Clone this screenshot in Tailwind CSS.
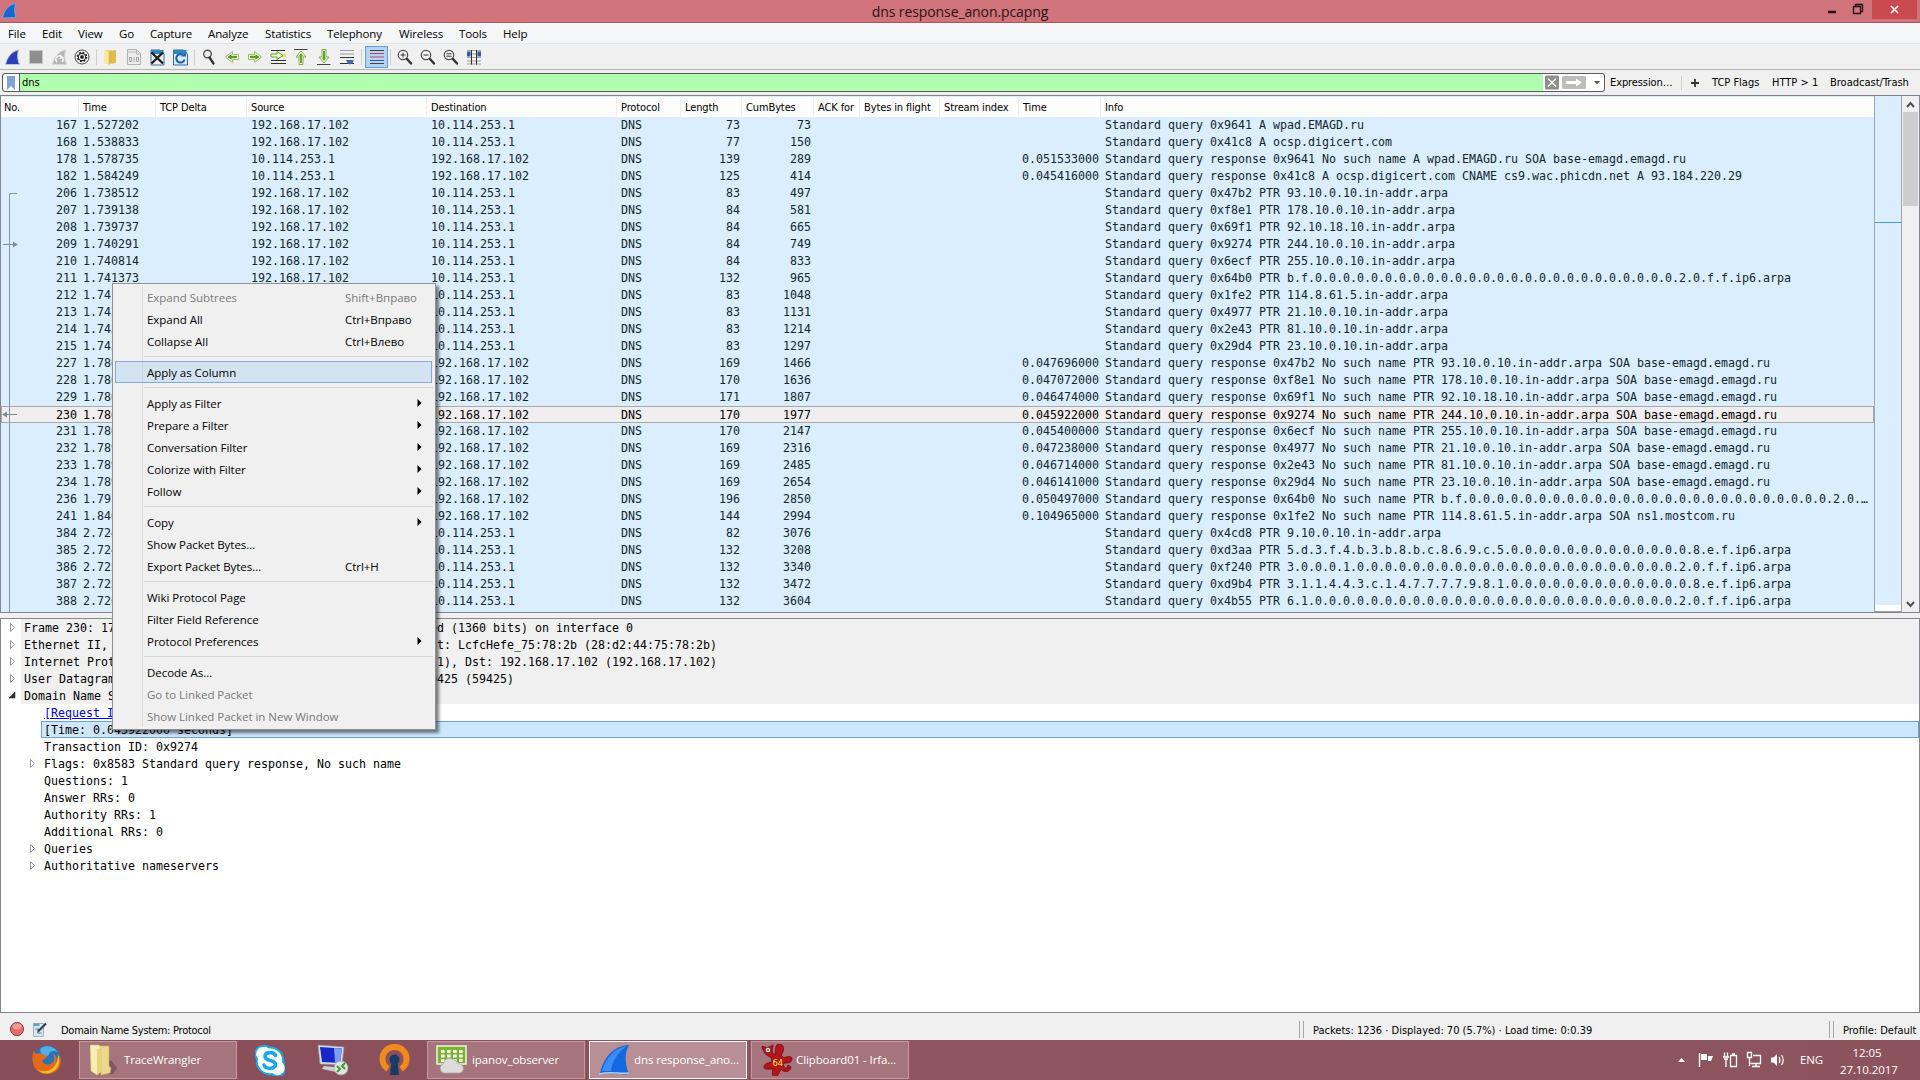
<!DOCTYPE html>
<html lang="en">
<head>
  <title>dns response_anon.pcapng</title>
  <meta charset="UTF-8" />
  <meta name="viewport" content="width=device-width, initial-scale=1" />
  <script src="https://cdn.jsdelivr.net/npm/@tailwindcss/browser@4"></script>
</head>
<body class="w-[1920px] h-[1080px] overflow-hidden flex flex-col bg-[#f0f0f0] text-black font-['DejaVu_Sans_Condensed','DejaVu_Sans',sans-serif] text-[11px] whitespace-nowrap">

  <!-- Title bar -->
  <header class="h-[23px] shrink-0 bg-[#d0737a] border-b border-[#a9555c] flex items-start relative">
    <svg class="w-4 h-4 mt-[3px] ml-[2px]" viewBox="0 0 16 16"><path d="M0.500 15C2 8 6 1.500 14 0.500C12 5 12.500 10 14 14.500Z" fill="#1767d2" stroke="#7db1ea" stroke-width="0.800"/></svg>
    <h1 class="absolute inset-x-0 top-0 text-center leading-[23px] text-[14px] text-[#2a1214] font-['Open_Sans',sans-serif] tracking-[-0.100px]">dns response_anon.pcapng</h1>
    <div class="ml-auto flex mr-[3px]">
      <svg class="w-[44px] h-[19px]" viewBox="0 0 44 19"><path d="M0 12h8" stroke="#241013" stroke-width="2.500"/><path d="M25.500 6.500h7v7h-7z M27.500 6v-1.500h7v7h-1.500" fill="none" stroke="#241013" stroke-width="1.300"/></svg>
      <div class="w-[45px] h-[19px] bg-[#c94b50] flex items-center justify-center">
        <svg class="w-[9px] h-[9px]" viewBox="0 0 9 9"><path d="M1 1l7 7M8 1l-7 7" stroke="#fff" stroke-width="1.600"/></svg>
      </div>
    </div>
  </header>

  <!-- Menu bar -->
  <nav class="h-[21px] shrink-0 bg-[#f5f6f7] border-b border-[#e3e4e6] flex items-center pl-2 pt-[2px] font-['Open_Sans',sans-serif] text-[11.500px] tracking-[-0.120px]">
    <span class="w-[34px]">File</span>
    <span class="w-[36px]">Edit</span>
    <span class="w-[41px]">View</span>
    <span class="w-[31px]">Go</span>
    <span class="w-[58px]">Capture</span>
    <span class="w-[57px]">Analyze</span>
    <span class="w-[62px]">Statistics</span>
    <span class="w-[72px]">Telephony</span>
    <span class="w-[60px]">Wireless</span>
    <span class="w-[44px]">Tools</span>
    <span>Help</span>
  </nav>

  <!-- Toolbar -->
  <div class="h-[26px] shrink-0 border-b border-[#b4b4b4] flex items-center">
    <svg class="w-[490px] h-[24px]" viewBox="0 45 490 24">
      <!-- start / stop / restart / options -->
      <path d="M5.500 64.500C7 58 11 51.500 18.500 50C17 55 17.500 60 19.500 64.500Z" fill="#2d3fb4" stroke="#b9c2e4"/>
      <rect x="29.500" y="50.500" width="13" height="13" fill="#8e8e8e" stroke="#c8c8c8"/>
      <path d="M52.500 64.500C54 58 58 51.500 65.500 50C64 55 64.500 60 66.500 64.500Z" fill="#b5b5b5" stroke="#d5d5d5"/>
      <path d="M57 62a3.500 3.500 0 1 1 5 0M60 55l2.500 2.500-3 1" fill="none" stroke="#f7f7f7" stroke-width="1.400"/>
      <circle cx="82" cy="57" r="7" fill="#fff" stroke="#444"/>
      <circle cx="82" cy="57" r="4.200" fill="#222"/><circle cx="82" cy="57" r="4.600" fill="none" stroke="#222" stroke-width="1.400" stroke-dasharray="1.900 1.700"/>
      <circle cx="82" cy="57" r="2.500" fill="none" stroke="#fff" stroke-width="1.200"/>
      <path d="M96.500 49v16M194.500 49v16M361.500 49v16M390.500 49v16" stroke="#cfcfcf"/>
      <!-- open / save / close / reload -->
      <path d="M104 50h8v12l-2 3-6-2z" fill="#f0d67d"/><path d="M109 51l7-1v13l-7 1z" fill="#e2bb4f"/><path d="M104 50l4 2v12l-4-1z" fill="#f9e8a6"/>
      <path d="M127.500 49.500h9l4 4v11h-13z" fill="#ececec" stroke="#b3b3b3"/><path d="M128 52h9M136.500 50v4h4" fill="none" stroke="#b3b3b3"/>
      <path d="M129.500 57.500h2v4h-2zM134 57v5M136.500 57.500h2v4h-2z" fill="none" stroke="#a5a5a5"/>
      <path d="M151 50h9l4 4v11h-13z" fill="#e9f0f4" stroke="#41768f"/><rect x="151" y="50" width="12.500" height="4" fill="#3089b7"/><path d="M151.500 52.500l11.500 11M163 52.500l-11.500 11" stroke="#1b1b1b" stroke-width="2.300"/>
      <path d="M173.500 50h10l4 4v11h-14z" fill="#dcecf6" stroke="#2a6e98"/><rect x="173.500" y="50" width="13" height="4" fill="#3089b7"/><path d="M184.500 59.500a4.200 4.200 0 1 1-1.500-4.500" fill="none" stroke="#1b5fae" stroke-width="2"/><path d="M181 56.500h5v-4z" fill="#1b5fae"/>
      <!-- find -->
      <circle cx="207.500" cy="54" r="3.800" fill="#ededed" stroke="#555" stroke-width="1.400"/><path d="M209.500 57.500l4 6" stroke="#333" stroke-width="2.300" stroke-linecap="round"/>
      <!-- navigation arrows -->
      <path d="M225.500 57l7-5.500v3h6v5h-6v3zM261.500 57l-7-5.500v3h-6v5h6v3z" fill="#fff" stroke="#8dba55" stroke-width="0.900"/>
      <path d="M227.500 57l4-3v1.800h5.500v2.400h-5.500v1.800zM259.500 57l-4-3v1.800h-5.500v2.400h5.500v1.800z" fill="#5f9c1c"/>
      <path d="M271 50.500h14M271 60.500h15M271 63.500h15" stroke="#333"/><path d="M280 53.500h6v3.500h-6z" fill="#f1e15a"/><path d="M271 54h6v-2.500l6 4-6 4V57h-6z" fill="#e9f5d5" stroke="#6ba526"/>
      <path d="M294 49.500h13.500" stroke="#444"/><path d="M301 51l5 6h-3v7.500h-4V57h-3z" fill="#fff" stroke="#7fae40"/><path d="M301 53l2.500 3.500h-1.500V63h-2v-6.500h-1.500z" fill="#6ba526"/>
      <path d="M317 64.500h13.500" stroke="#444"/><path d="M324 63l5-6h-3v-7.500h-4V57h-3z" fill="#fff" stroke="#7fae40"/><path d="M324 61l2.500-3.500h-1.500V51h-2v6.500h-1.500z" fill="#6ba526"/>
      <path d="M340 50.500h14M340 54h14" stroke="#9c9c9c"/><path d="M340 57.500h14M340 63.500h14" stroke="#333"/><path d="M346 60h8l-1.500 3-2.500 1.500-2.500-1.500z" fill="#3b6cab"/>
      <!-- colorize -->
      <rect x="365.500" y="46.500" width="22" height="21" fill="#b5d3f3" stroke="#5f9ddb"/>
      <path d="M370 50.500h14" stroke="#3d4350"/><path d="M370 53.500h14" stroke="#c6404b"/><path d="M370 57h14" stroke="#b0506a"/><path d="M370 60.500h14" stroke="#3556a6"/><path d="M370 63.500h14" stroke="#3d4350"/>
      <!-- zoom in / out / normal -->
      <g fill="#f4f4f4" stroke="#4c4c4c" stroke-width="1.200"><circle cx="403" cy="55" r="4.700"/><circle cx="426" cy="55" r="4.700"/><circle cx="449" cy="55" r="4.700"/></g>
      <path d="M407 59l4 4.500M430 59l4 4.500M453 59l4 4.500" stroke="#333" stroke-width="2.400" stroke-linecap="round"/>
      <path d="M400.500 55h5M403 52.500v5M423.500 55h5M446.500 53.800h5M446.500 56.200h5" stroke="#333"/>
      <!-- resize columns -->
      <path d="M467 50.500h14M467 54h14M467 57.500h14M467 61h14M467 64h14" stroke="#8b8b8b" stroke-width="0.800"/><path d="M471.500 50v14.500M476.500 50v14.500" stroke="#333"/>
      <path d="M467 51.500h3.500v5H467zM477.500 51.500h3.500v5h-3.500z" fill="#2c5f9e"/>
    </svg>
  </div>

  <!-- Display filter -->
  <div class="h-[25px] shrink-0 flex items-center pl-[2px]">
    <div class="w-[1603px] h-[19px] border border-[#5a5a5a] rounded-[3px] bg-white flex items-center overflow-hidden">
      <div class="w-[17px] h-full border-r border-[#5a5a5a] flex items-center justify-center shrink-0">
        <svg class="w-[8px] h-[14px]" viewBox="0 0 8 14"><path d="M0 0h8v14l-4-4-4 4z" fill="#7da3d8"/></svg>
      </div>
      <div class="w-[1523px] h-full bg-[#afffaf] pl-[2px] leading-[18px] text-[11px] shrink-0">dns</div>
      <svg class="w-[60px] h-[17px] shrink-0" viewBox="0 0 60 17">
        <rect x="2" y="1.500" width="14" height="14" rx="1.500" fill="#8e8e8e"/><path d="M5 4.500l8 8M13 4.500l-8 8" stroke="#fff" stroke-width="1.300"/>
        <rect x="19" y="2" width="24" height="13" rx="1.500" fill="#bdbdbd"/><path d="M23 7h10V4.500l6 4-6 4V10H23z" fill="#fff"/>
        <path d="M51 7h6l-3 3.500z" fill="#555"/>
      </svg>
    </div>
    <span class="ml-[5px] w-[71px] pt-[2px] tracking-[-0.100px]">Expression…</span>
    <span class="w-px h-[14px] bg-[#cfcfcf]"></span>
    <svg class="ml-[9px] w-[8px] h-[8px]" viewBox="0 0 8 8"><path d="M4 0v8M0 4h8" stroke="#333" stroke-width="1.800"/></svg>
    <span class="ml-[13px] w-[60px] pt-[2px]">TCP Flags</span>
    <span class="w-[58px] pt-[2px]">HTTP &gt; 1</span>
    <span class="pt-[2px]">Broadcast/Trash</span>
  </div>

  <!-- Packet list -->
  <section class="h-[518px] shrink-0 border border-[#828790] border-t-[#7b7f8a] flex relative">
    <div class="w-[1874px] bg-[#daeeff] border-r border-[#9aa7b3] flex flex-col">
      <div class="mt-px h-[20px] shrink-0 bg-[#fdfdfd] grid grid-cols-[78px_77px_91px_180px_190px_64px_61px_72px_46px_80px_79px_82px_1fr] items-center [&>span]:border-r [&>span]:border-[#ececf2] [&>span]:h-full [&>span]:leading-[22px] [&>span]:pl-[4px] [&>span:first-child]:pl-[3px] [&>span:last-child]:border-0 tracking-[-0.120px]">
        <span>No.</span><span>Time</span><span>TCP Delta</span><span>Source</span><span>Destination</span><span>Protocol</span><span>Length</span><span>CumBytes</span><span>ACK for</span><span>Bytes in flight</span><span>Stream index</span><span>Time</span><span>Info</span>
      </div>
      <div id="packets" class="flex flex-col font-['DejaVu_Sans_Mono',monospace] text-[11.630px] text-[#12272e]"></div>
    </div>
    <!-- Intelligent scrollbar minimap -->
    <div class="w-[26px] flex flex-col">
      <div class="h-[126px] bg-[#daeeff]"></div>
      <div class="h-px bg-[#4a9bdc]"></div>
      <div class="h-[382px] bg-[#daeeff]"></div>
      <div class="h-[7px] bg-white border-b border-[#a0a0a0]"></div>
    </div>
    <div class="w-[18px] bg-[#f0f0f0] border-l border-[#a5a5a5] flex flex-col items-center">
      <svg class="w-[15px] h-[16px]" viewBox="0 0 15 16"><path d="M4 11l3.500-4 3.500 4" fill="none" stroke="#505050" stroke-width="2"/></svg>
      <div class="w-[15px] h-[94px] bg-[#cdcdcd]"></div>
      <svg class="w-[15px] h-[16px] mt-auto" viewBox="0 0 15 16"><path d="M4 6l3.500 4L11 6" fill="none" stroke="#505050" stroke-width="2"/></svg>
    </div>
    <!-- Related packet marks -->
    <svg class="absolute left-0 top-[21px] w-[20px] h-[495px]" viewBox="0 0 20 495">
      <path d="M16 76.500H8.500V495" fill="none" stroke="#8397a8"/>
      <path d="M2 127.500h12M4 297.500h12" stroke="#7d8c99"/>
      <path d="M12 124.500l5 3-5 3zM6 294.500l-5 3 5 3z" fill="#7d8c99"/>
    </svg>
  </section>

  <!-- Packet details -->
  <section class="mt-[5px] h-[395px] shrink-0 border border-[#828790] bg-white font-['DejaVu_Sans_Mono',monospace] text-[11.630px]" id="details"></section>

  <!-- Status bar -->
  <footer class="h-[27px] shrink-0 flex items-center pt-[6px] pl-[9px]">
    <svg class="w-[40px] h-[18px]" viewBox="0 0 40 18">
      <circle cx="8" cy="8" r="6.600" fill="#e8686b" stroke="#8c4a4c"/><ellipse cx="8" cy="5.500" rx="4.500" ry="3" fill="#f19a9c"/>
      <path d="M24.500 2.500h10v13h-10z" fill="#d9e6ec" stroke="#9db2bd"/><path d="M24.500 2.500h6v2.500h-6z" fill="#5aa3c9"/><path d="M26.500 8h3l-1 4h4" fill="none" stroke="#4d7da0"/><path d="M29 10.500L37 2.500" stroke="#2e3d47" stroke-width="2.200"/>
    </svg>
    <span class="ml-[12px] w-[1238px] pt-[3px] tracking-[-0.260px]">Domain Name System: Protocol</span>
    <span class="w-[5px] h-[17px] border-x border-[#a8a8a8]"></span>
    <span class="ml-[9px] w-[516px] pt-[3px]">Packets: 1236 · Displayed: 70 (5.7%) · Load time: 0:0.39</span>
    <span class="w-[5px] h-[17px] border-x border-[#a8a8a8]"></span>
    <span class="ml-[9px] pt-[3px]">Profile: Default</span>
  </footer>

  <!-- Windows taskbar -->
  <div class="h-[40px] shrink-0 bg-linear-to-r from-[#874e57] via-[#8f5660] to-[#8b535b] flex items-center text-white font-['Open_Sans',sans-serif] text-[11.500px] tracking-[-0.100px]">
    <svg class="w-[30px] h-[30px] ml-[31px]" viewBox="0 0 30 30">
      <circle cx="16" cy="14" r="13.500" fill="#2573b8"/><path d="M10 3c5-3 13-2 17 4-4-2-8-1-9 2s-4 3-6 1-4-4-2-7z" fill="#56b0e4"/>
      <path d="M3 5c0 2 1 3 2 4 2-1 4-1 6 0l5 2c-1 3-4 3-5 5 2 4 8 5 11 1 2-3 1-7 0-9 6 5 4 13-1 16 6-2 8-9 7-15 4 8 1 20-12 20C5 29-2 18 3 5z" fill="#e56a17"/>
      <path d="M27 9c3 7 1 16-8 19-5 1-9 0-12-3 9 4 20-1 20-16z" fill="#f7b82a"/>
    </svg>
    <div class="ml-[18px] w-[158px] h-[38px] border border-[#c39ba1] bg-[#a5747c] flex items-center pl-[10px]">
      <svg class="w-[29px] h-[32px]" viewBox="0 0 29 32"><path d="M3 29l20 1 4-6-6-8z" fill="#5d3a40" opacity=".5"/><path d="M8 2l11 0v20l2 2-1 5-9 2z" fill="#ecd98b" stroke="#c9b05a" stroke-width=".6"/><path d="M0 1h9l2 3v23l-4 4-6-4z" fill="#f8edb5" stroke="#d4bf6e" stroke-width=".6"/><path d="M7 5l4-1v24l-4 3z" fill="#e9d27a"/></svg>
      <span class="ml-[5px]">TraceWrangler</span>
    </div>
    <svg class="w-[30px] h-[31px] ml-[18px]" viewBox="0 0 30 31">
      <path d="M8 1a7.500 7.500 0 0 1 6 1.500A13 13 0 0 1 28 17a7.500 7.500 0 0 1-11 12A13 13 0 0 1 2 14 8 8 0 0 1 8 1z" fill="#fff" stroke="#18a9ea" stroke-width="2"/>
      <path d="M20.500 10.500C19 6.500 10 6.500 10 11.500s10.500 3 10.500 8-10 5-11.500 .5" fill="none" stroke="#18a9ea" stroke-width="3.600" stroke-linecap="round"/>
    </svg>
    <svg class="w-[32px] h-[32px] ml-[32px]" viewBox="0 0 32 32">
      <path d="M1 1l26 2-2 18-22-1z" fill="#d8dde5" stroke="#8c95a5" stroke-width=".6"/><path d="M3 3l22 1.500-2 14.500-18-1z" fill="#1626c9"/><path d="M17 4l8 .5-2 14.500-5-.3z" fill="#7f9bf2"/>
      <path d="M7 22l10 1 2 5-14-3z" fill="#c9ced6"/><circle cx="24" cy="24" r="7" fill="#dfe6df" stroke="#9aa49a" stroke-width=".6"/><path d="M20 22l3 3-3 3M28 19l-3 3 3 3" fill="none" stroke="#3f9a3b" stroke-width="2"/>
    </svg>
    <svg class="w-[31px] h-[32px] ml-[30px]" viewBox="0 0 31 32">
      <path d="M9 25A12 12 0 1 1 22 25" fill="none" stroke="#f08a1d" stroke-width="6"/><circle cx="15.500" cy="15.500" r="5" fill="#173a66"/><path d="M12.500 18h6l1.500 13h-9z" fill="#173a66"/>
    </svg>
    <div class="ml-[17px] w-[158px] h-[38px] border border-[#c39ba1] bg-[#a5747c] flex items-center pl-[8px]">
      <svg class="w-[31px] h-[32px]" viewBox="0 0 31 32"><rect x="1" y="2" width="29" height="18" fill="#7bb32e" stroke="#eef6e2" stroke-width="1.500"/><path d="M5 7.500h22M5 12h22M5 16.500h22" stroke="#fff" stroke-width="3.200" stroke-dasharray="3.600 2.400"/><path d="M8 29a5 5 0 0 1-.5-9.500A6 6 0 0 1 17 15.500a6 6 0 0 1 5 4.500 4.500 4.500 0 0 1 1.500 9z" fill="#dcdcdc" stroke="#a8a8a8" stroke-width=".7"/></svg>
      <span class="ml-[5px]">ipanov_observer</span>
    </div>
    <div class="ml-[4px] w-[158px] h-[38px] border border-white bg-[#b88f95] flex items-center pl-[9px]">
      <svg class="w-[31px] h-[32px]" viewBox="0 0 31 32"><path d="M1 30C4 15 13 2 30 1C25 10 26 20 30 30C22 31.500 12 28 1 30Z" fill="#1469de"/><path d="M3 27C7 14 15 4 28 2C18 9 13 18 12 27Z" fill="#3b8df2"/><path d="M0 30c10-3 20 0 30-1" fill="none" stroke="#a9d0f7" stroke-width="1.500"/></svg>
      <span class="ml-[4px]">dns response_ano…</span>
    </div>
    <div class="ml-[4px] w-[158px] h-[38px] border border-[#c39ba1] bg-[#a5747c] flex items-center pl-[8px] relative">
      <svg class="w-[33px] h-[32px]" viewBox="0 0 33 32"><path d="M2 2l5 2 6-3-1 7 3 3c1-4-1-11 5-11 5 1 4 8 1 11l3 3c4-2 8-2 8 1 0 4-4 4-7 4s-1 6 2 5l1-3 3 2c0 5-8 6-10 2-2 4-3 8-6 8s-3-4-2-8c-4 0-9 1-9-2s3-4 8-5l-1-5C6 12 3 8 2 2z" fill="#b5141a" stroke="#6d0b0e" stroke-width=".8"/><circle cx="8" cy="6" r="2.300" fill="#f7e7e7"/><path d="M7 6h2" stroke="#222"/><text x="12.500" y="22" font-size="8.500" fill="#ffee55" font-family="DejaVu Sans">64</text></svg>
      <span class="ml-[3px]">Clipboard01 - Irfa…</span>
    </div>
    <!-- Tray -->
    <svg class="ml-auto w-[110px] h-[24px]" viewBox="1676 1049 110 24" fill="none" stroke="#fff">
      <path d="M1678 1063l3.500-4 3.500 4z" fill="#fff" stroke="none"/>
      <path d="M1699.500 1054v14" stroke-width="1.400"/><path d="M1701 1055h6v6h-6zM1708 1057h5l-2 5h-3z" fill="#fff" stroke="none"/>
      <path d="M1730.500 1056.500h6v11h-6zM1732 1055h3" stroke-width="1.300"/><path d="M1724.500 1053.500v4M1727.500 1053.500v4M1723 1058h6M1724 1060h4M1726 1060v8" stroke-width="1.300"/>
      <path d="M1753 1056.500h7.500v8h-10M1756 1065v3M1752 1067.500h8M1747.500 1053.500h4v5h-4zM1749.500 1059v8" stroke-width="1.300"/>
      <path d="M1771 1058.500h2.500l3.500-3.500v12l-3.500-3.500h-2.500z" fill="#fff" stroke="none"/><path d="M1779 1058q2 3 0 6M1781.500 1056q3.500 5 0 10" stroke-width="1.200"/>
    </svg>
    <span class="ml-[14px] w-[40px]">ENG</span>
    <div class="w-[54px] mr-[26px] text-center leading-[17px] pt-px"><div>12:05</div><div>27.10.2017</div></div>
  </div>

  <!-- Context menu -->
  <div id="menu" class="absolute left-[112px] top-[283px] w-[324px] h-[447px] border border-[#8d9399] bg-[#f0f0f0] shadow-[3px_3px_3px_rgba(0,0,0,0.5)] pt-[2px] px-[2px] font-['Open_Sans',sans-serif] text-[11.500px] tracking-[-0.030px]">
    <div class="absolute left-[29px] top-[2px] bottom-[2px] w-px bg-[#dcdcdc]"></div>
  </div>

  <script>
    const A = '192.168.17.102', B = '10.114.253.1';
    const z = (n) => '0.'.repeat(n);
    const soa = ' SOA base-emagd.emagd.ru';
    const q = 'Standard query ', r = 'Standard query response ', n = ' No such name ';

    // no, time, is response, length, cumulative bytes, response time, info
    const packets = [
      [167, '1.527202', 0, 73, 73, '', q + '0x9641 A wpad.EMAGD.ru'],
      [168, '1.538833', 0, 77, 150, '', q + '0x41c8 A ocsp.digicert.com'],
      [178, '1.578735', 1, 139, 289, '0.051533000', r + '0x9641' + n + 'A wpad.EMAGD.ru' + soa],
      [182, '1.584249', 1, 125, 414, '0.045416000', r + '0x41c8 A ocsp.digicert.com CNAME cs9.wac.phicdn.net A 93.184.220.29'],
      [206, '1.738512', 0, 83, 497, '', q + '0x47b2 PTR 93.10.0.10.in-addr.arpa'],
      [207, '1.739138', 0, 84, 581, '', q + '0xf8e1 PTR 178.10.0.10.in-addr.arpa'],
      [208, '1.739737', 0, 84, 665, '', q + '0x69f1 PTR 92.10.18.10.in-addr.arpa'],
      [209, '1.740291', 0, 84, 749, '', q + '0x9274 PTR 244.10.0.10.in-addr.arpa'],
      [210, '1.740814', 0, 84, 833, '', q + '0x6ecf PTR 255.10.0.10.in-addr.arpa'],
      [211, '1.741373', 0, 132, 965, '', q + '0x64b0 PTR b.f.' + z(26) + '2.0.f.f.ip6.arpa'],
      [212, '1.741926', 0, 83, 1048, '', q + '0x1fe2 PTR 114.8.61.5.in-addr.arpa'],
      [213, '1.742480', 0, 83, 1131, '', q + '0x4977 PTR 21.10.0.10.in-addr.arpa'],
      [214, '1.743021', 0, 83, 1214, '', q + '0x2e43 PTR 81.10.0.10.in-addr.arpa'],
      [215, '1.743577', 0, 83, 1297, '', q + '0x29d4 PTR 23.10.0.10.in-addr.arpa'],
      [227, '1.786208', 1, 169, 1466, '0.047696000', r + '0x47b2' + n + 'PTR 93.10.0.10.in-addr.arpa' + soa],
      [228, '1.786210', 1, 170, 1636, '0.047072000', r + '0xf8e1' + n + 'PTR 178.10.0.10.in-addr.arpa' + soa],
      [229, '1.786211', 1, 171, 1807, '0.046474000', r + '0x69f1' + n + 'PTR 92.10.18.10.in-addr.arpa' + soa],
      [230, '1.786213', 1, 170, 1977, '0.045922000', r + '0x9274' + n + 'PTR 244.10.0.10.in-addr.arpa' + soa],
      [231, '1.786214', 1, 170, 2147, '0.045400000', r + '0x6ecf' + n + 'PTR 255.10.0.10.in-addr.arpa' + soa],
      [232, '1.789718', 1, 169, 2316, '0.047238000', r + '0x4977' + n + 'PTR 21.10.0.10.in-addr.arpa' + soa],
      [233, '1.789735', 1, 169, 2485, '0.046714000', r + '0x2e43' + n + 'PTR 81.10.0.10.in-addr.arpa' + soa],
      [234, '1.789718', 1, 169, 2654, '0.046141000', r + '0x29d4' + n + 'PTR 23.10.0.10.in-addr.arpa' + soa],
      [236, '1.791870', 1, 196, 2850, '0.050497000', r + '0x64b0' + n + 'PTR b.f.' + z(26) + '2.0.f.f.ip6.arpa' + soa],
      [241, '1.846891', 1, 144, 2994, '0.104965000', r + '0x1fe2' + n + 'PTR 114.8.61.5.in-addr.arpa SOA ns1.mostcom.ru'],
      [384, '2.724102', 0, 82, 3076, '', q + '0x4cd8 PTR 9.10.0.10.in-addr.arpa'],
      [385, '2.724650', 0, 132, 3208, '', q + '0xd3aa PTR 5.d.3.f.4.b.3.b.8.b.c.8.6.9.c.5.' + z(13) + '8.e.f.ip6.arpa'],
      [386, '2.725203', 0, 132, 3340, '', q + '0xf240 PTR 3.0.0.0.1.' + z(23) + '2.0.f.f.ip6.arpa'],
      [387, '2.725761', 0, 132, 3472, '', q + '0xd9b4 PTR 3.1.1.4.4.3.c.1.4.7.7.7.7.9.8.1.' + z(13) + '8.e.f.ip6.arpa'],
      [388, '2.726305', 0, 132, 3604, '', q + '0x4b55 PTR 6.1.' + z(26) + '2.0.f.f.ip6.arpa'],
    ];

    document.getElementById('packets').innerHTML = packets.map(([no, time, resp, len, cum, rt, info]) => `
      <div class="h-[17px] leading-[17px] grid grid-cols-[78px_77px_91px_180px_190px_64px_61px_72px_46px_80px_79px_82px_1fr] ${no === 230 ? 'bg-[#f0eeee] text-black outline outline-[#a9a9a9] -outline-offset-1 pt-px' : ''}">
        <span class="text-right pr-[2px]">${no}</span><span class="pl-[4px]">${time}</span><span></span>
        <span class="pl-[4px]">${resp ? B : A}</span><span class="pl-[4px]">${resp ? A : B}</span><span class="pl-[4px]">DNS</span>
        <span class="text-right pr-[2px]">${len}</span><span class="text-right pr-[3px]">${cum}</span>
        <span></span><span></span><span></span><span class="pl-[3px]">${rt}</span><span class="truncate pl-[4px] pr-[2px]">${info}</span>
      </div>`).join('');

    // kind: closed/open top level, link, selected, leaf, child
    const details = [
      ['closed', 'Frame 230: 170 bytes on wire (1360 bits), 170 bytes captured (1360 bits) on interface 0'],
      ['closed', 'Ethernet II, Src: Routerbo_6c:5c:e1 (d4:ca:6d:6c:5c:e1), Dst: LcfcHefe_75:78:2b (28:d2:44:75:78:2b)'],
      ['closed', 'Internet Protocol Version 4, Src: 10.114.253.1 (10.114.253.1), Dst: 192.168.17.102 (192.168.17.102)'],
      ['closed', 'User Datagram Protocol, Src Port: domain (53), Dst Port: 59425 (59425)'],
      ['open', 'Domain Name System (response)'],
      ['link', '[Request In: 209]'],
      ['selected', '[Time: 0.045922000 seconds]'],
      ['leaf', 'Transaction ID: 0x9274'],
      ['child', 'Flags: 0x8583 Standard query response, No such name'],
      ['leaf', 'Questions: 1'],
      ['leaf', 'Answer RRs: 0'],
      ['leaf', 'Authority RRs: 1'],
      ['leaf', 'Additional RRs: 0'],
      ['child', 'Queries'],
      ['child', 'Authoritative nameservers'],
    ];
    const closed = '<svg class="w-[12px] h-[17px] shrink-0" viewBox="0 0 12 17"><path d="M3.500 4.500l4 4-4 4z" fill="#fff" stroke="#9a9a9a"/></svg>';
    const open = '<svg class="w-[12px] h-[17px] shrink-0" viewBox="0 0 12 17"><path d="M8 5v6H2z" fill="#333" stroke="#222" stroke-width="0.500"/></svg>';

    document.getElementById('details').innerHTML = details.map(([kind, text]) => {
      if (kind === 'closed' || kind === 'open') {
        return `<div class="h-[17px] leading-[19px] flex pl-[6px]">${kind === 'open' ? open : closed}<span class="ml-[2px] pl-[3px] grow h-[17px] bg-[#f0f0f0]">${text}</span></div>`;
      }
      if (kind === 'child') {
        return `<div class="h-[17px] leading-[19px] flex pl-[26px]">${closed}<span class="ml-[5px]">${text}</span></div>`;
      }
      if (kind === 'selected') {
        return `<div class="h-[17px] leading-[17px] ml-[40px] pl-[2px] bg-[#cfe6ff] border border-[#6ba4d4]">${text}</div>`;
      }
      return `<div class="h-[17px] leading-[19px] pl-[43px] ${kind === 'link' ? 'text-[#0000e0] underline' : ''}">${text}</div>`;
    }).join('');

    const menu = [
      ['Expand Subtrees', 'Shift+Вправо', 'off'], ['Expand All', 'Ctrl+Вправо'], ['Collapse All', 'Ctrl+Влево'], null,
      ['Apply as Column', '', 'hot'], null,
      ['Apply as Filter', '', 'sub'], ['Prepare a Filter', '', 'sub'], ['Conversation Filter', '', 'sub'], ['Colorize with Filter', '', 'sub'], ['Follow', '', 'sub'], null,
      ['Copy', '', 'sub'], ['Show Packet Bytes…', ''], ['Export Packet Bytes…', 'Ctrl+H'], null,
      ['Wiki Protocol Page', ''], ['Filter Field Reference', ''], ['Protocol Preferences', '', 'sub'], null,
      ['Decode As…', ''], ['Go to Linked Packet', '', 'off'], ['Show Linked Packet in New Window', '', 'off'],
    ];
    const arrow = '<svg class="w-[5px] h-[8px]" viewBox="0 0 5 8"><path d="M0.500 0l4 4-4 4z"/></svg>';
    document.getElementById('menu').innerHTML += menu.map((m) => {
      if (!m) return '<div class="h-[9px] pt-[4px] pl-[29px]"><div class="h-px bg-[#d5d5d5]"></div></div>';
      const [label, key, state] = m;
      return `<div class="relative h-[22px] flex items-center ${state === 'off' ? 'text-[#7a7a7a]' : ''}">
        ${state === 'hot' ? '<div class="absolute inset-0 mr-px bg-[#c0daf2]/60 border border-[#7ea9dc]"></div>' : ''}
        <span class="relative ml-[32px] w-[198px] pt-[2px]">${label}</span><span class="w-[72px] pt-[2px]">${key}</span>${state === 'sub' ? arrow : ''}
      </div>`;
    }).join('');
  </script>
</body>
</html>
